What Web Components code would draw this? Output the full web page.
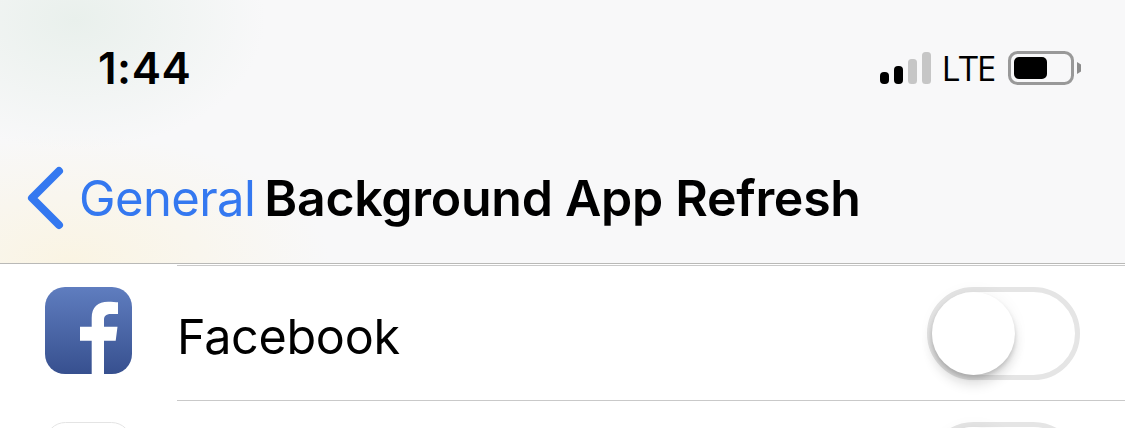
<!DOCTYPE html>
<html lang="en">
<head>
<meta charset="utf-8">
<title>Background App Refresh</title>
<style>
  html, body {
    margin: 0;
    height: 428px;
    overflow: hidden;
    background: #fff;
    font-family: Inter, "Liberation Sans", sans-serif;
  }
</style>
</head>
<body>
<app-header>
  <status-bar time="1:44" network="LTE"></status-bar>
  <nav-bar back="General" title="Background App Refresh"></nav-bar>
</app-header>
<settings-row label="Facebook" first>
  <svg slot="icon" width="87" height="87" viewBox="0 0 87 87">
    <defs>
      <linearGradient id="fb" x1="0" y1="0" x2="0" y2="1">
        <stop offset="0" stop-color="#5f7dbf"/>
        <stop offset="1" stop-color="#37508f"/>
      </linearGradient>
    </defs>
    <rect width="87" height="87" rx="20" fill="url(#fb)"/>
    <path fill="#fff" d="M46.7 87V53.7H35V39.7H46.7V31C46.7 20 53 14.7 63 14.7C67 14.7 71 15 73 15.3V27H66C60.5 27 59 29.5 59 33V39.7H72.5L70.7 53.7H59V87Z"/>
  </svg>
</settings-row>
<settings-row>
  <svg slot="icon" width="87" height="87" viewBox="0 0 87 87">
    <rect x=".5" y=".5" width="86" height="86" rx="20" fill="#fff" stroke="#e4e4e4"/>
  </svg>
</settings-row>

<script>
class AppHeader extends HTMLElement {
  constructor() {
    super();
    this.attachShadow({ mode: "open" });
    this.shadowRoot.innerHTML = `
      <style>
        :host {
          display: block;
          height: 263px;
          border-bottom: 1px solid #b9b9b7;
          background:
            radial-gradient(ellipse 190px 130px at 75px 20px, #e9f0ec 0%, rgba(233,240,236,0) 100%),
            radial-gradient(ellipse 260px 130px at 70px 263px, #faf4e3 0%, rgba(250,244,227,0) 100%),
            #f8f8f9;
        }
      </style>
      <slot></slot>
    `;
  }
}

class StatusBar extends HTMLElement {
  constructor() {
    super();
    this.attachShadow({ mode: "open" });
  }

  connectedCallback() {
    const time = this.getAttribute("time") || "";
    const network = this.getAttribute("network") || "";
    this.shadowRoot.innerHTML = `
      <style>
        :host {
          display: flex;
          align-items: center;
          justify-content: space-between;
          height: 136px;
          padding: 0 44px 0 98px;
          color: #000;
        }
        .time {
          font-size: 44px;
          font-weight: 600;
          letter-spacing: 0.5px;
        }
        .right {
          display: flex;
          align-items: center;
        }
        .net {
          font-size: 35px;
          font-weight: 500;
          font-family: "Open Sans", sans-serif;
          line-height: 36px;
          margin: 0 13px 0 11px;
          letter-spacing: -1.2px;
        }
        svg { display: block; }
      </style>
      <span class="time">${time}</span>
      <div class="right">
        <svg width="51" height="32" viewBox="0 0 51 32">
          <rect x="0" y="20" width="9" height="12" rx="4" fill="#000"/>
          <rect x="14" y="14" width="9" height="18" rx="4" fill="#000"/>
          <rect x="28" y="7" width="9" height="25" rx="3.5" fill="#c6c6c6"/>
          <rect x="42" y="0" width="9" height="32" rx="3.5" fill="#c6c6c6"/>
        </svg>
        <span class="net">${network}</span>
        <svg width="73" height="34" viewBox="0 0 73 34">
          <rect x="1.5" y="1.5" width="63" height="31" rx="8" fill="none" stroke="#999" stroke-width="3"/>
          <rect x="6" y="6" width="33" height="22" rx="5" fill="#000"/>
          <path d="M69 11l4 2.5v7l-4 2.5z" fill="#8c8c8c"/>
        </svg>
      </div>
    `;
  }
}

class NavBar extends HTMLElement {
  constructor() {
    super();
    this.attachShadow({ mode: "open" });
  }

  connectedCallback() {
    const back = this.getAttribute("back") || "";
    const title = this.getAttribute("title") || "";
    this.shadowRoot.innerHTML = `
      <style>
        :host {
          display: flex;
          align-items: center;
          height: 124px;
          padding-left: 27px;
        }
        .nav {
          display: flex;
          align-items: center;
          height: 122px;
        }
        svg { display: block; flex: none; margin-right: 15px; }
        .back {
          font-size: 49px;
          font-weight: 400;
          color: #3478f0;
          margin-right: 9px;
          letter-spacing: -0.6px;
        }
        .title {
          font-size: 50px;
          font-weight: 600;
          color: #000;
          letter-spacing: -0.27px;
        }
      </style>
      <div class="nav">
        <svg width="37" height="64" viewBox="0 0 37 64">
          <path d="M32 5L5 32l27 27" fill="none" stroke="#3478f0" stroke-width="8" stroke-linecap="round" stroke-linejoin="round"/>
        </svg>
        <span class="back">${back}</span>
        <span class="title">${title}</span>
      </div>
    `;
  }
}

class IosToggle extends HTMLElement {
  constructor() {
    super();
    this.attachShadow({ mode: "open" });
    this.shadowRoot.innerHTML = `
      <style>
        :host {
          display: block;
          position: relative;
          box-sizing: border-box;
          width: 153px;
          height: 93px;
          border: 5px solid #e5e5e5;
          border-radius: 47px;
          background: #fff;
        }
        .knob {
          position: absolute;
          left: 0;
          top: 0;
          width: 83px;
          height: 83px;
          border-radius: 50%;
          background: #fff;
          box-shadow: 0 10px 12px rgba(0,0,0,.12), 0 3px 4px rgba(0,0,0,.14), 0 0 16px rgba(0,0,0,.05);
        }
      </style>
      <div class="knob"></div>
    `;
  }
}

class SettingsRow extends HTMLElement {
  constructor() {
    super();
    this.attachShadow({ mode: "open" });
  }

  connectedCallback() {
    const label = this.getAttribute("label") || "";
    this.shadowRoot.innerHTML = `
      <style>
        :host {
          display: flex;
          padding-left: 45px;
          background: #fff;
        }
        :host([first]) { padding-top: 1px; }
        .icon {
          flex: none;
          width: 87px;
          padding-top: 21px;
          margin-right: 45px;
        }
        :host([first]) .icon { padding-top: 22px; }
        .icon ::slotted(svg) { display: block; }
        .body {
          flex: 1;
          display: flex;
          align-items: flex-start;
          justify-content: space-between;
          box-sizing: border-box;
          height: 136px;
          padding: 21px 45px 0 0;
          border-bottom: 1px solid #c9c9c9;
        }
        :host([first]) .body { border-top: 1px solid #c9c9c9; }
        .label {
          font-size: 48.5px;
          line-height: 99px;
          color: #000;
          letter-spacing: -0.3px;
        }
      </style>
      <div class="icon"><slot name="icon"></slot></div>
      <div class="body">
        <span class="label">${label}</span>
        <ios-toggle></ios-toggle>
      </div>
    `;
  }
}

customElements.define("app-header", AppHeader);
customElements.define("status-bar", StatusBar);
customElements.define("nav-bar", NavBar);
customElements.define("ios-toggle", IosToggle);
customElements.define("settings-row", SettingsRow);
</script>
</body>
</html>
